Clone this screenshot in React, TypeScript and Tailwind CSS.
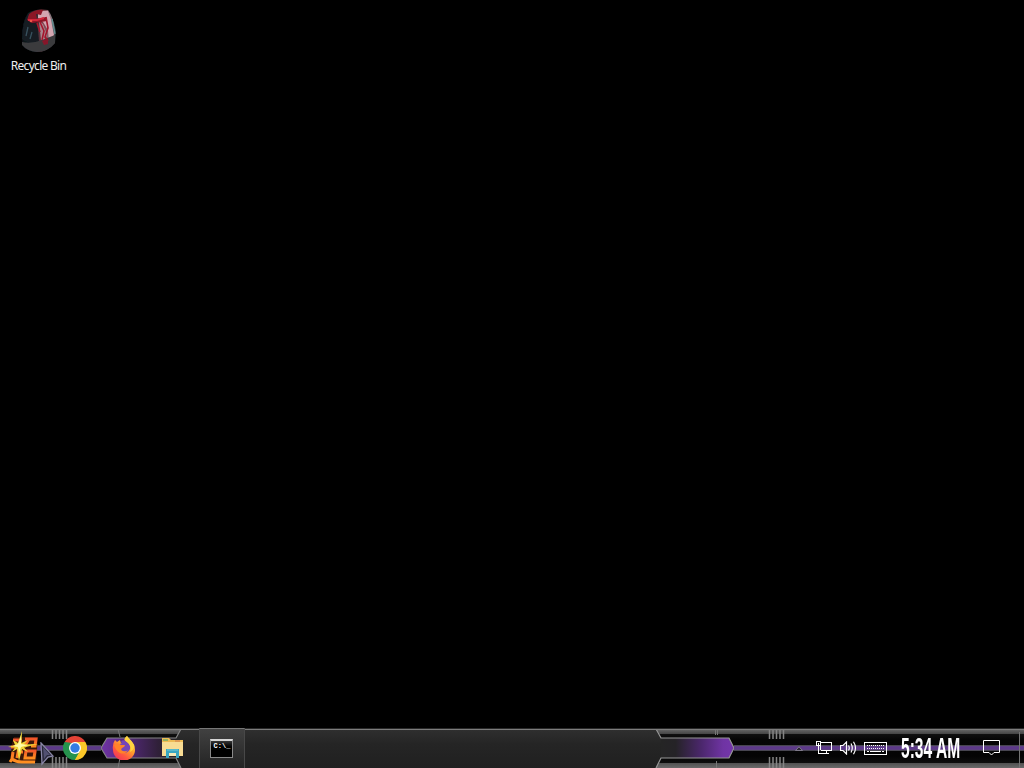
import type { ReactNode } from "react";

function RecycleBinIcon() {
  return (
    <svg width="40" height="46" viewBox="0 0 40 46">
      <defs>
        <linearGradient id="binGlass" x1="0" y1="0" x2="1" y2="0">
          <stop offset="0" stopColor="#080f13" />
          <stop offset="0.4" stopColor="#1f2b31" />
          <stop offset="0.6" stopColor="#7c3842" />
          <stop offset="0.85" stopColor="#8b7a80" />
          <stop offset="1" stopColor="#1c2d31" />
        </linearGradient>
        <filter id="binSoft" x="-10%" y="-10%" width="120%" height="120%">
          <feGaussianBlur stdDeviation="0.75" />
        </filter>
      </defs>
      <g filter="url(#binSoft)">
        <path d="M9 5Q17 0 29 2Q34 9 37 23L36 35Q27 44 18 44Q7 43 3 37L3 29Q3 13 9 5Z" fill="url(#binGlass)" />
        <path d="M9 6L18 13L20 34Q8 36 3 31Q3 14 9 6Z" fill="#131c22" />
        <path d="M19 3L29 3L32 12L35 27L30 34L29 22L24 14L19 10Z" fill="#d3a6b0" />
        <path d="M20 13L24 16L28 27L26 32L22 32Z" fill="#a9848c" />
        <path d="M3 34Q13 36 23 32L36 27L36 35Q29 44 18 44Q8 43 3 37Z" fill="#3b3a3e" />
        <path d="M10 6Q17 1 24 2L22 7L17 6L18 11L27 9L28 13L22 14L13 15L8 12Z" fill="#8c1727" />
        <path d="M9 12L18 12L25 10" stroke="#d2253a" strokeWidth="2" fill="none" />
        <path d="M27 9L29 20L26 29L29 33M21 14L25 23L23 32M18 15L21 24" stroke="#a4142b" strokeWidth="1.6" fill="none" />
        <path d="M23 33L29 30L29 36L25 37Z" fill="#861829" />
        <path d="M9 19L7 28M13 24L11 31" stroke="#39515e" strokeWidth="1.3" />
        <path d="M33 11L36 26" stroke="#648e91" strokeWidth="1.3" />
        <circle cx="12" cy="13" r="1.3" fill="#ed5546" />
      </g>
    </svg>
  );
}

// Metal rails, vents and purple energy cells behind the taskbar buttons
function TaskbarArt() {
  const vents = [52, 55.5, 59, 62.5, 66, 769, 772.5, 776, 779.5, 783];
  return (
    <svg className="absolute inset-0" width="1024" height="40" viewBox="0 0 1024 40">
      <defs>
        <linearGradient id="bar" x1="0" y1="0" x2="0" y2="1">
          <stop offset="0" stopColor="#303030" />
          <stop offset="0.4" stopColor="#252525" />
          <stop offset="1" stopColor="#202020" />
        </linearGradient>
        <linearGradient id="railTop" x1="0" y1="0" x2="0" y2="1">
          <stop offset="0" stopColor="#6a6a6a" />
          <stop offset="1" stopColor="#444" />
        </linearGradient>
        <linearGradient id="railBottom" x1="0" y1="0" x2="0" y2="1">
          <stop offset="0" stopColor="#505050" />
          <stop offset="1" stopColor="#6b6b6b" />
        </linearGradient>
        <linearGradient id="core" x1="0" y1="0" x2="0" y2="1">
          <stop offset="0" stopColor="#1b1b1b" />
          <stop offset="0.3" stopColor="#050505" />
          <stop offset="0.7" stopColor="#040404" />
          <stop offset="1" stopColor="#161616" />
        </linearGradient>
        <linearGradient id="cellLeft">
          <stop offset="0" stopColor="#7034a5" />
          <stop offset="0.25" stopColor="#5b2a88" />
          <stop offset="0.75" stopColor="#302039" />
          <stop offset="1" stopColor="#252525" />
        </linearGradient>
        <linearGradient id="cellRight">
          <stop offset="0" stopColor="#252525" />
          <stop offset="0.2" stopColor="#252327" />
          <stop offset="0.55" stopColor="#4b276c" />
          <stop offset="0.85" stopColor="#6f34a3" />
          <stop offset="1" stopColor="#7436ab" />
        </linearGradient>
      </defs>
      <rect width="1024" height="40" fill="url(#bar)" />
      {/* Left end */}
      <path d="M0 0H181L176 10V30L181 40H0Z" fill="url(#core)" />
      <path d="M0 1H181L178 6H0Z" fill="url(#railTop)" />
      <path d="M0 35H178L181 40H0Z" fill="url(#railBottom)" />
      <path d="M107 10H177V30H107L101 20Z" fill="url(#cellLeft)" />
      <path d="M181 1L176 10H107L101 20L107 30H176L181 40" fill="none" stroke="#858585" strokeWidth="1.2" />
      {/* Right end */}
      <path d="M656 0H1024V40H656L661 30V10Z" fill="url(#core)" />
      <path d="M656 1H1024V6H659Z" fill="url(#railTop)" />
      <path d="M659 35H1024V40H656Z" fill="url(#railBottom)" />
      <path d="M661 10H729L734 20L729 30H661Z" fill="url(#cellRight)" />
      <path d="M656 1L661 10H729L734 20L729 30H661L656 40" fill="none" stroke="#969696" strokeWidth="1.2" />
      <path d="M118 1L120 9M120 30L118 40M715.5 1V7M717.5 1V7M716.5 33V40" stroke="#777" />
      {/* Centre conduit */}
      <path d="M0 20H101M734 20H1024" stroke="#5e5b6a" strokeWidth="5.5" />
      <path d="M0 20H101M734 20H1024" stroke="#5d398a" strokeWidth="3.6" />
      {vents.map((x) => (
        <path key={x} d={`M${x + 0.5} 0V11M${x + 0.5} 29V40`} stroke="#848484" strokeWidth="1.5" />
      ))}
      <path d="M0 1.5H1024" stroke="#7c7c7c" />
      <path d="M0 .5H1024" stroke="#292929" />
      <path d="M1019.5 4V40" stroke="#737373" />
    </svg>
  );
}

function StartIcon() {
  return (
    <svg width="32" height="34" viewBox="0 0 32 34">
      <defs>
        <linearGradient id="kanji" x1="0" y1="0" x2="0" y2="1">
          <stop offset="0" stopColor="#f0562a" />
          <stop offset="1" stopColor="#ff8f20" />
        </linearGradient>
      </defs>
      <path d="M6 6H30L28 31H2L4 12Z" fill="#3b170b" />
      <g fill="none" stroke="url(#kanji)" strokeWidth="3">
        <path d="M5 9H14M3 16H14M11 16L9 27M11 21H15M5 21L4 28L2 31M4 28Q8 31 14 31H27" />
        <path d="M17 8H28L27 15H23M21 8L16 16" />
        <path d="M18 20H27L26 27H17Z" />
      </g>
      <path d="M14 0L13.5 12L20 9L16 13.5L30 13L16 16.5L20 21L14 18L11 30L9 18L4 21L7 16.5L0 16L7 14L5 9L10 12Z" fill="#f0d638" />
      <path d="M13 5L13 13L20 14L13 16L11 22L10 16L5 15L10 13Z" fill="#fffca8" />
    </svg>
  );
}

function ChromeIcon() {
  return (
    <svg width="24" height="24" viewBox="0 0 24 24">
      <path d="M12 12L1.6 6A12 12 0 0 1 22.4 6Z" fill="#e44336" />
      <path d="M12 12L22.4 6A12 12 0 0 1 12 24Z" fill="#fbc728" />
      <path d="M12 12V24A12 12 0 0 1 1.6 6Z" fill="#26934d" />
      <path d="M12 6H22.4L17 14.8Z" fill="#fbc728" />
      <path d="M1.6 6L7 15L12 12L9 7Z" fill="#26934d" />
      <path d="M7 15L12 24L17 15Z" fill="#26934d" />
      <path d="M12 24L17.2 15L21 13L20 21Z" fill="#fbc728" />
      <circle cx="12" cy="12" r="6" fill="#fff" />
      <circle cx="12" cy="12" r="4.7" fill="#347ce4" />
    </svg>
  );
}

function FirefoxIcon() {
  return (
    <svg width="24" height="24" viewBox="0 0 24 24">
      <defs>
        <linearGradient id="fox" x1="0.85" y1="0" x2="0.15" y2="1">
          <stop offset="0" stopColor="#ffe34f" />
          <stop offset="0.4" stopColor="#ffa52b" />
          <stop offset="0.7" stopColor="#ff5740" />
          <stop offset="1" stopColor="#ed3062" />
        </linearGradient>
      </defs>
      <path d="M3 4L5 6L8 4L9 7L13 5Q11 3 15 0Q16 3 19 5Q23 8 23 14A11 10.5 0 0 1 1 14Q0 8 3 4Z" fill="url(#fox)" />
      <path d="M9 5Q12 3 15 6Q19 8 18 13Q16 17 12 17Q7 16 6 12L8 8L10 7Z" fill="#7645b8" />
      <path d="M2 9Q6 6 9 9L13 9Q13 11 10 12Q8 14 11 15Q14 16 16 14Q13 19 8 17Q4 15 2 9Z" fill="#ff8329" />
      <path d="M15 0Q11 3 15 6Q20 10 18 16Q23 13 22 9Q20 5 15 0Z" fill="#ffd33f" />
    </svg>
  );
}

function FolderIcon() {
  return (
    <svg width="23" height="20" viewBox="0 0 23 20">
      <path d="M1 2V0H8L10 2H22V18H1Z" fill="#eebc54" />
      <path d="M2 2H7" stroke="#3ba46d" />
      <path d="M14 3H19" stroke="#cf7852" />
      <path d="M1 4H22V18H1Z" fill="#f8dc93" />
      <path d="M5 11H18V20H15V16H8V20H5Z" fill="#38a6c2" />
      <path d="M6 11H17V13H6Z" fill="#57b9cb" />
      <path d="M8 15H15V18H8Z" fill="#f6e9b7" />
    </svg>
  );
}

function TerminalIcon() {
  return (
    <div className="h-[19px] w-[23px] overflow-hidden border border-[#8a8a8a] border-t-2 border-t-[#d5d5d5] bg-gradient-to-b from-[#383838] via-black via-50% to-black pl-0.5 pt-px font-['Liberation_Mono',monospace] text-[7px] font-bold leading-[8px] tracking-[0px] text-white">
      C:\_
    </div>
  );
}

function NetworkIcon() {
  return (
    <svg width="17" height="14" viewBox="0 0 17 14" fill="none" stroke="white" shapeRendering="crispEdges">
      <path d="M5 1.5H15.5V9.5H5M10.5 9.5V12M5 12.5H13M2.5 5V12.5H5M.5 .5H4.5V4.5H.5ZM2.5 1.5V4M4.5 5V9" />
    </svg>
  );
}

function VolumeIcon() {
  return (
    <svg width="17" height="14" viewBox="0 0 17 14" fill="none" stroke="white" strokeWidth="1.2">
      <path d="M.5 4.5H3L6.5 1V13L3 9.5H.5ZM8.5 4.5Q10 7 8.5 9.5M11 2.5Q13.5 7 11 11.5M13.5 .7Q17.5 7 13.5 13.3" />
    </svg>
  );
}

function KeyboardIcon() {
  return (
    <svg width="23" height="13" viewBox="0 0 23 13" fill="none" stroke="white" shapeRendering="crispEdges">
      <rect x=".5" y=".5" width="22" height="12" />
      <path d="M3 3.5H20M3 6.5H20" strokeDasharray="1 1" />
      <path d="M3 9.5H5M6 9.5H17M18 9.5H20" />
    </svg>
  );
}

function TaskbarButton({ label, className, children }: { label: string; className: string; children: ReactNode }) {
  return (
    <button aria-label={label} className={`flex h-10 shrink-0 items-center justify-center ${className}`}>
      {children}
    </button>
  );
}

export default function App() {
  return (
    <div className="flex h-[768px] w-[1024px] flex-col overflow-hidden bg-black">
      {/* Desktop */}
      <main className="flex-1">
        <div className="flex w-[77px] flex-col items-center pt-2">
          <RecycleBinIcon />
          <span className="mt-1 whitespace-nowrap font-['Noto_Sans',sans-serif] text-[12px] leading-4 tracking-[-0.7px] text-[#eee]">
            Recycle Bin
          </span>
        </div>
      </main>

      {/* Taskbar */}
      <footer className="relative h-10 shrink-0">
        <TaskbarArt />
        <div className="relative flex h-10 items-center">
          <TaskbarButton label="Start" className="w-[50px] pr-0.5">
            <StartIcon />
          </TaskbarButton>
          <TaskbarButton label="Chrome" className="w-[49px]">
            <ChromeIcon />
          </TaskbarButton>
          <TaskbarButton label="Firefox" className="w-[49px]">
            <FirefoxIcon />
          </TaskbarButton>
          <TaskbarButton label="File Explorer" className="w-[51px] pr-0.5">
            <FolderIcon />
          </TaskbarButton>
          <TaskbarButton
            label="Command Prompt"
            className="w-[46px] border-x border-t border-[#484848] border-t-[#777] bg-gradient-to-b from-[#414141] to-[#242424] pr-0.5"
          >
            <TerminalIcon />
          </TaskbarButton>

          <div className="ml-auto flex h-10 items-center">
            <TaskbarButton label="Show hidden icons" className="mr-[13px]">
              <svg width="8" height="5" viewBox="0 0 8 5">
                <path d="M.5 4.5L4 .8L7.5 4.5Z" fill="#2b2633" stroke="#908c9c" strokeWidth=".8" />
              </svg>
            </TaskbarButton>
            <TaskbarButton label="Network" className="mr-[7px]">
              <NetworkIcon />
            </TaskbarButton>
            <TaskbarButton label="Volume" className="mr-[7px]">
              <VolumeIcon />
            </TaskbarButton>
            <TaskbarButton label="Keyboard" className="mr-[14px]">
              <KeyboardIcon />
            </TaskbarButton>
            <div className="flex h-10 w-[60px] items-center pb-px">
              <span className="origin-left scale-x-[0.52] whitespace-nowrap font-['Liberation_Sans',sans-serif] text-[30px] font-bold leading-[39px] text-white">
                5:34 AM
              </span>
            </div>
            <TaskbarButton label="Notifications" className="ml-[22px] mr-[24px]">
              <svg width="17" height="16" viewBox="0 0 17 16" fill="none" stroke="white">
                <path d="M.5 .5H16.5V12.5H11L8.5 15L6 12.5H.5Z" />
              </svg>
            </TaskbarButton>
          </div>
        </div>

        {/* Mouse pointer */}
        <svg className="absolute left-[40px] top-[14px]" width="17" height="24" viewBox="0 0 17 24">
          <path d="M1 1L13 14L8 15L2 22Z" fill="#29283a" stroke="#8885a5" strokeWidth="1.3" />
          <path d="M3 5L4 17L7 13L10 13Z" fill="#515071" />
        </svg>
      </footer>
    </div>
  );
}
